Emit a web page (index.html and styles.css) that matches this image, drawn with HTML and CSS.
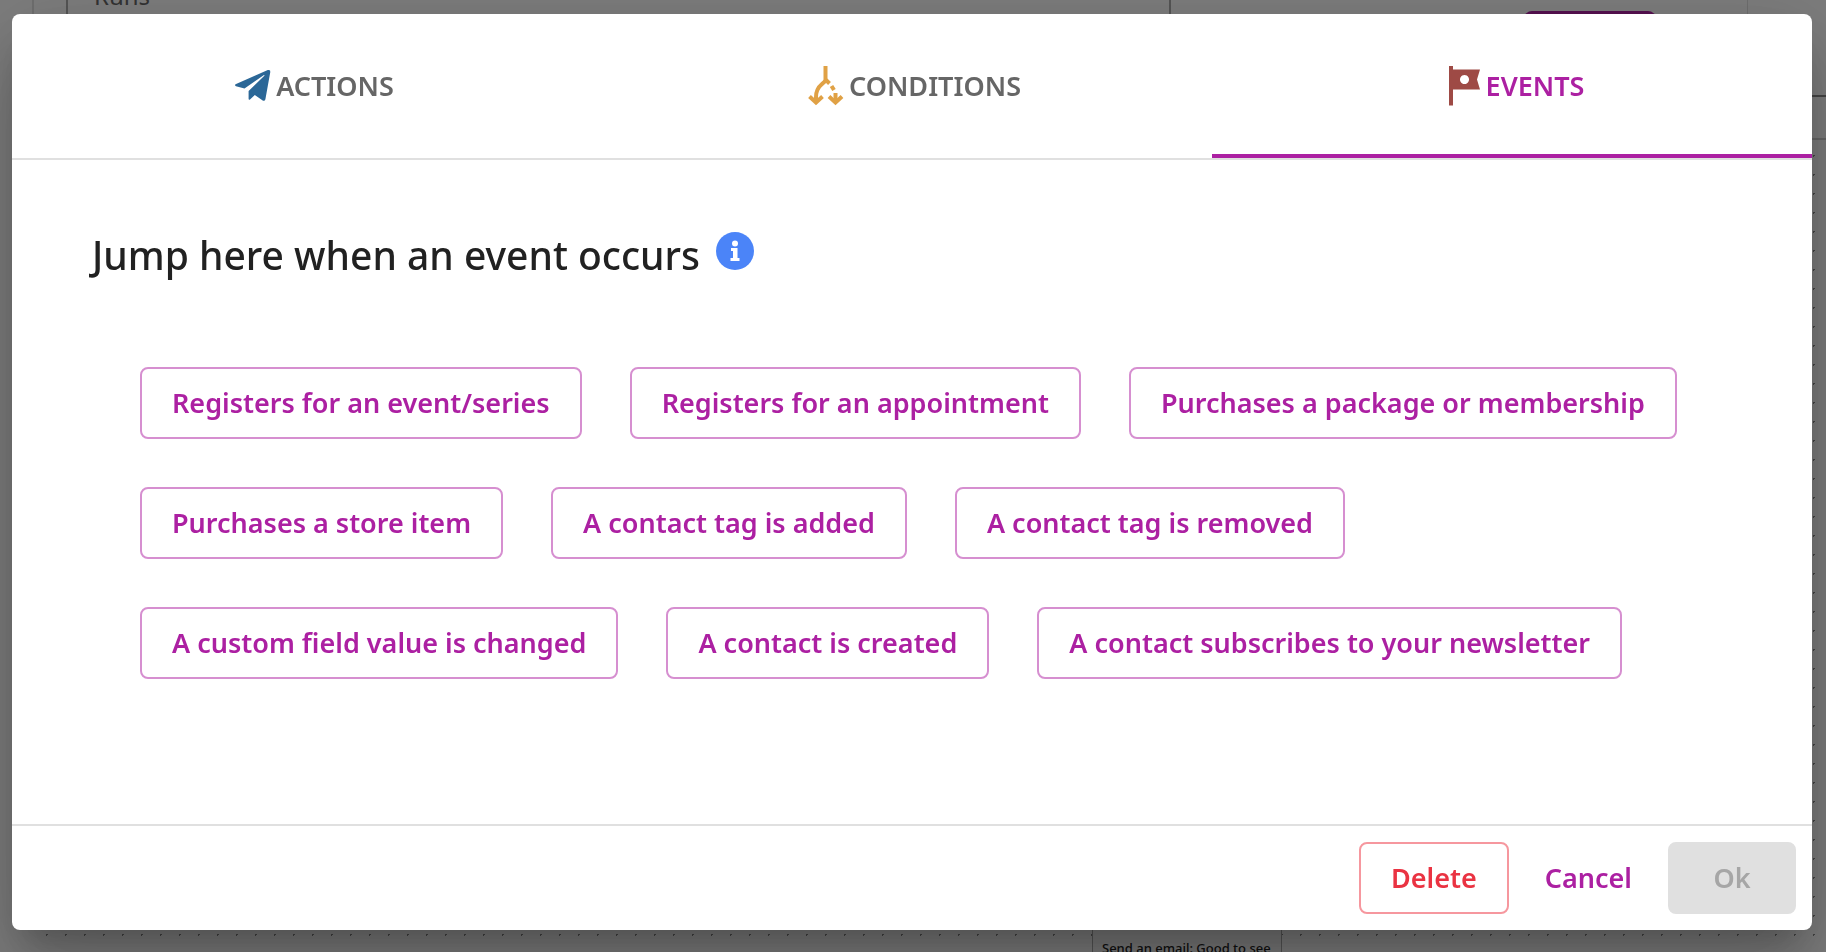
FILE: index.html
```
<!DOCTYPE html>
<html lang="en">
<head>
    <meta charset="UTF-8">
    <meta name="viewport" content="width=device-width, initial-scale=1.0">
    <title>Automation</title>
    <link rel="stylesheet" href="styles.css">
</head>
<body>
    <!-- Automation page behind the dialog -->
    <div class="page">
        <div class="page-top">
            <div class="settings-card">
                <div class="runs-field">Runs</div>
                <div class="save-button"></div>
            </div>
        </div>
        <div class="toolbar"></div>
        <div class="canvas">
            <div class="node">Send an email: Good to see</div>
        </div>
    </div>

    <div class="overlay">
        <div class="dialog" role="dialog" aria-modal="true" aria-labelledby="dialogTitle">
            <div class="tabs" role="tablist">
                <button class="tab" role="tab" aria-selected="false">
                    <svg class="tab-icon" viewBox="0 0 46 46">
                        <path fill="#2b6797" d="M5.500 21.200 L37.800 7.100 Q40.600 6.300 40.300 9 L35.400 36.200 Q34.900 38.300 32.700 37.500 L24.800 31.900 L20 36.600 Q18.600 37.400 18.600 35.700 V27.900 L34.600 12.400 Q34.200 11.900 33.600 12.300 L14.500 25.400 L6 23.200 Q4 22.200 5.500 21.200 Z"/>
                    </svg>
                    <span>ACTIONS</span>
                </button>
                <button class="tab" role="tab" aria-selected="false">
                    <svg class="tab-icon" viewBox="0 0 46 46" fill="none" stroke="#e0a145" stroke-width="4">
                        <path d="M22.500 3 V17 Q22 19 19 21 Q13 26 13 34 V38"/>
                        <path d="M6.500 33.500 L13 39.500 L19.500 33.500 M26 33.500 L32.500 39.500 L39 33.500"/>
                        <path d="M23 17 L26.500 20.500 M28.500 23 L31 27 M32.500 30 V38"/>
                    </svg>
                    <span>CONDITIONS</span>
                </button>
                <button class="tab active" role="tab" aria-selected="true">
                    <svg class="tab-icon" viewBox="0 0 46 46">
                        <path fill="#9e4a45" fill-rule="evenodd" d="M9 3 H13 V6.500 H40 L37 16.500 L40 26.500 H13 V42.500 H9 Z M24.500 12 a4.500 4.500 0 1 0 0.010 0 Z"/>
                    </svg>
                    <span>EVENTS</span>
                </button>
            </div>

            <div class="dialog-body">
                <h1 class="title" id="dialogTitle">
                    Jump here when an event occurs
                    <svg class="info-icon" viewBox="0 0 38 38">
                        <circle cx="19" cy="19" r="19" fill="#4b84f8"/>
                        <circle cx="19" cy="11.500" r="3" fill="#fff"/>
                        <path fill="#fff" d="M15 16 H21.500 V26 H23.500 V29 H14.500 V26 H17 V19 H15 Z"/>
                    </svg>
                </h1>
                <div class="events">
                    <button class="button">Registers for an event/series</button>
                    <button class="button">Registers for an appointment</button>
                    <button class="button">Purchases a package or membership</button>
                    <button class="button">Purchases a store item</button>
                    <button class="button">A contact tag is added</button>
                    <button class="button">A contact tag is removed</button>
                    <button class="button">A custom field value is changed</button>
                    <button class="button">A contact is created</button>
                    <button class="button">A contact subscribes to your newsletter</button>
                </div>
            </div>

            <div class="dialog-footer">
                <button class="button button-delete">Delete</button>
                <button class="button button-text">Cancel</button>
                <button class="button button-ok" disabled>Ok</button>
            </div>
        </div>
    </div>
</body>
</html>
```

FILE: styles.css
```
* {
    box-sizing: border-box;
}

body {
    margin: 0;
    font-family: "Noto Sans", sans-serif;
    color: #212121;
    overflow: hidden;
}

/* Page behind the dialog */
.page {
    display: flex;
    flex-direction: column;
    height: 100vh;
    overflow: hidden;
    background-color: #fafafa;
}

.page-top {
    height: 95px;
    padding: 0 78px 0 32px;
}

.settings-card {
    display: flex;
    justify-content: space-between;
    height: 95px;
    padding: 0 91px 0 32px;
    border-left: 2px solid #ddd;
    border-right: 1px solid #ddd;
}

.runs-field {
    width: 1105px;
    height: 60px;
    margin-top: -16px;
    padding-left: 26px;
    border-left: 2px solid #aaa;
    border-right: 2px solid #aaa;
    color: #666;
    font-size: 24px;
    line-height: 24px;
}

.save-button {
    width: 132px;
    height: 60px;
    margin-top: 11px;
    border-radius: 8px;
    background-color: #ac20a2;
}

.toolbar {
    height: 45px;
    margin-left: 32px;
    border-top: 2px solid #888;
    border-bottom: 2px solid #ccc;
}

.canvas {
    display: flex;
    flex: 1;
    align-items: flex-end;
    justify-content: center;
    margin-left: 32px;
    padding-left: 516px;
    background-image: radial-gradient(circle, #888 1px, transparent 1px);
    background-size: 19px 19px;
    background-position: 5px 6px;
}

.node {
    width: 190px;
    height: 72px;
    margin-bottom: -48px;
    padding: 10px 9px 0;
    border-left: 1px solid #aaa;
    border-right: 1px solid #aaa;
    background-color: #f5f5f5;
    font-size: 13px;
    font-weight: 500;
    line-height: 20px;
    white-space: nowrap;
}

/* Dialog */
.overlay {
    position: fixed;
    inset: 0;
    display: flex;
    padding: 14px 14px 22px 12px;
    background-color: rgba(0, 0, 0, 0.5);
}

.dialog {
    display: flex;
    flex: 1;
    flex-direction: column;
    border-radius: 8px;
    background-color: #fff;
    box-shadow: 0 22px 30px -14px rgba(0, 0, 0, 0.2), 0 48px 76px 6px rgba(0, 0, 0, 0.14), 0 18px 92px 16px rgba(0, 0, 0, 0.12);
}

.tabs {
    display: flex;
    border-bottom: 2px solid #e0e0e0;
}

.tab {
    display: flex;
    flex: 1;
    align-items: center;
    justify-content: center;
    height: 144px;
    padding: 2px 0 0;
    border: none;
    border-bottom: 4px solid transparent;
    background: none;
    color: #666;
    font-family: inherit;
    font-size: 27px;
    font-weight: 600;
    cursor: pointer;
}

.tab.active {
    border-bottom-color: #ac20a2;
    color: #ac20a2;
}

.tab-icon {
    width: 46px;
    height: 46px;
    margin-top: 2px;
}

.dialog-body {
    flex: 1;
    padding: 64px 80px;
}

.title {
    display: flex;
    gap: 16px;
    margin: 0;
    font-size: 39px;
    font-weight: 500;
    line-height: 62px;
}

.info-icon {
    width: 38px;
    height: 38px;
    margin-top: 8px;
}

.events {
    display: flex;
    flex-wrap: wrap;
    gap: 48px;
    padding: 81px 48px 0;
}

.button {
    height: 72px;
    padding: 0 30px 2px;
    border: 2px solid #d68fd0;
    border-radius: 8px;
    background-color: #fff;
    color: #ac20a2;
    font-family: inherit;
    font-size: 27px;
    font-weight: 600;
    cursor: pointer;
}

.dialog-footer {
    display: flex;
    justify-content: flex-end;
    gap: 16px;
    padding: 16px;
    border-top: 2px solid #e0e0e0;
}

.button-delete {
    border-color: #f6979e;
    color: #ea3342;
}

.button-text {
    padding: 0 18px 2px;
    border-color: transparent;
}

.button-ok {
    width: 128px;
    border-color: #e0e0e0;
    background-color: #e0e0e0;
    color: #a6a6a6;
    cursor: default;
}
```
